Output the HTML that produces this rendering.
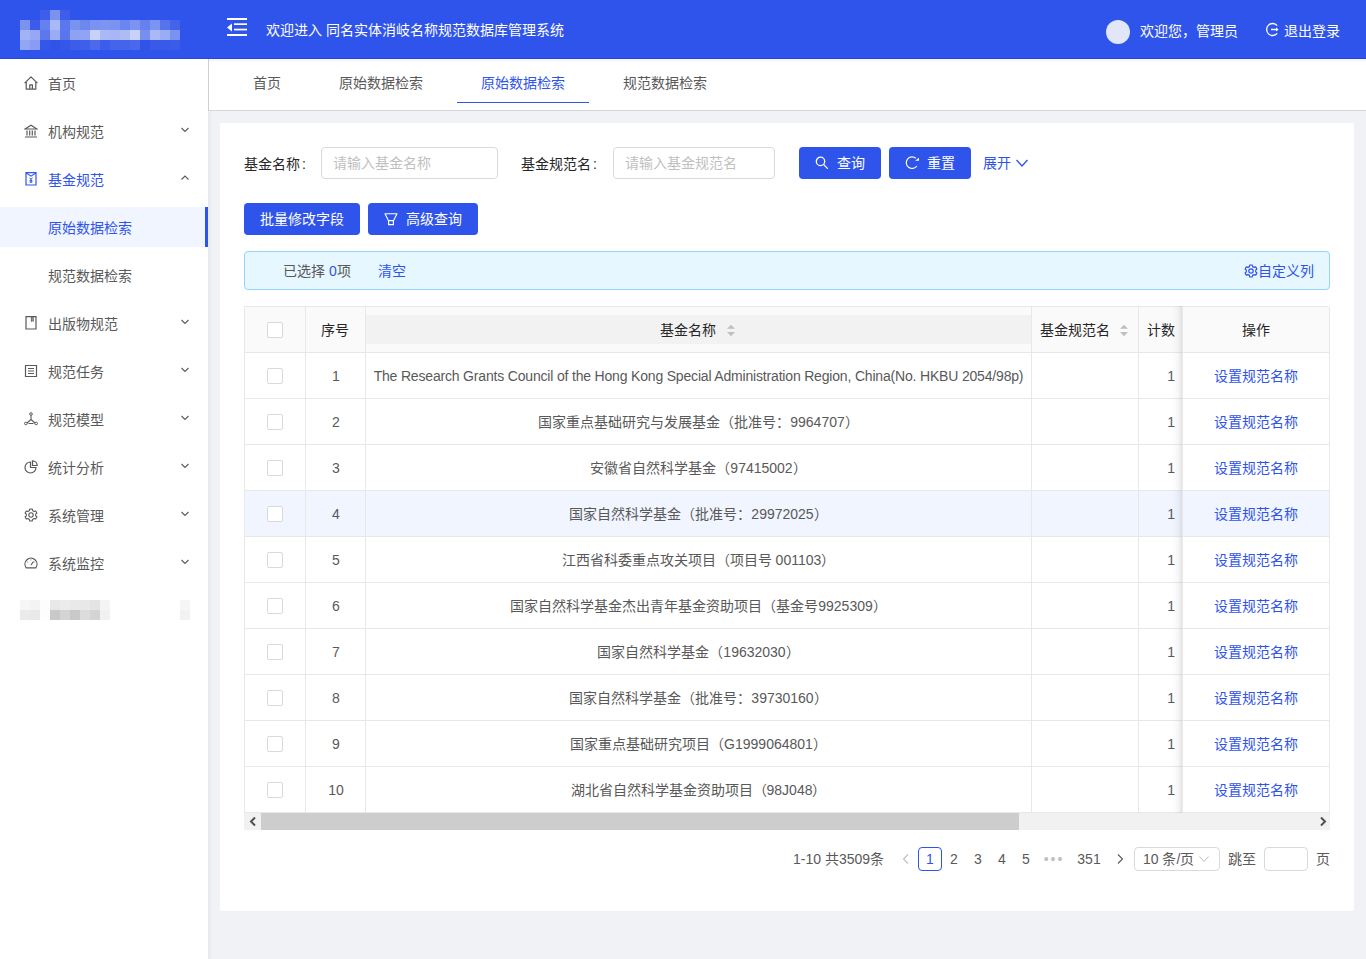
<!DOCTYPE html><html lang="zh-CN"><head><meta charset="utf-8"><style>
*{box-sizing:border-box;margin:0;padding:0}
html,body{width:1366px;height:959px;overflow:hidden}
body{background:#f0f2f5;font-family:"Liberation Sans",sans-serif;font-size:14px;color:#595959;position:relative}
.a{position:absolute}
.nw{white-space:nowrap}
#hdr{left:0;top:0;width:1366px;height:59px;background:#2f54eb;border-bottom:1px solid #2446e4}
.mz{position:absolute;width:10px;height:10px}
#side{left:0;top:59px;width:208px;height:900px;background:#fff}
.mi{position:absolute;left:0;width:208px;height:40px;line-height:40px;color:#595959}
.mi .t{position:absolute;left:48px;top:0}
.mi svg.ic{position:absolute;left:24px;top:12px}
.mi svg.ar{position:absolute;left:180px;top:13px}
#tabs{left:209px;top:59px;width:1157px;height:52px;background:#fff;border-bottom:1px solid #d6d6d6}
.tab{position:absolute;top:0;height:51px;line-height:48px;color:#595959}
#card{left:220px;top:123px;width:1134px;height:788px;background:#fff;border-radius:2px}
.lbl{color:#262626}
.inp{position:absolute;height:32px;border:1px solid #d9d9d9;border-radius:4px;background:#fff;color:#bfbfbf;line-height:30px;padding-left:11px}
.btn{position:absolute;height:32px;border-radius:4px;background:#2f54eb;color:#fff;line-height:32px}
.th{position:absolute;color:#262626}
.cb{position:absolute;width:16px;height:16px;border:1px solid #d9d9d9;border-radius:2px;background:#fff}
.row{position:absolute;left:0;width:1086px;height:46px;border-bottom:1px solid #e8e8e8}
.vl{position:absolute;top:0;width:1px;background:#e8e8e8}
.pg{position:absolute;top:0;height:24px;line-height:24px;text-align:center;color:#595959}
</style></head><body>
<div id="hdr" class="a">
<div class="mz" style="left:40px;top:10px;background:#3d5dea"></div>
<div class="mz" style="left:50px;top:10px;background:#7a92f0"></div>
<div class="mz" style="left:60px;top:10px;background:#3d5dea"></div>
<div class="mz" style="left:20px;top:20px;background:#7b93f0"></div>
<div class="mz" style="left:30px;top:20px;background:#3a5ce9"></div>
<div class="mz" style="left:40px;top:20px;background:#6580ef"></div>
<div class="mz" style="left:50px;top:20px;background:#aab8f6"></div>
<div class="mz" style="left:60px;top:20px;background:#5a77ee"></div>
<div class="mz" style="left:70px;top:20px;background:#7b93f0"></div>
<div class="mz" style="left:80px;top:20px;background:#6d87ef"></div>
<div class="mz" style="left:90px;top:20px;background:#7b93f0"></div>
<div class="mz" style="left:100px;top:20px;background:#7d95f1"></div>
<div class="mz" style="left:110px;top:20px;background:#7b93f0"></div>
<div class="mz" style="left:120px;top:20px;background:#6c86ef"></div>
<div class="mz" style="left:130px;top:20px;background:#7c94f1"></div>
<div class="mz" style="left:140px;top:20px;background:#6780ee"></div>
<div class="mz" style="left:150px;top:20px;background:#7c94f1"></div>
<div class="mz" style="left:160px;top:20px;background:#5673ec"></div>
<div class="mz" style="left:170px;top:20px;background:#4562ea"></div>
<div class="mz" style="left:20px;top:30px;background:#a2b2f5"></div>
<div class="mz" style="left:30px;top:30px;background:#96a8f4"></div>
<div class="mz" style="left:40px;top:30px;background:#5c78ec"></div>
<div class="mz" style="left:50px;top:30px;background:#9aacf4"></div>
<div class="mz" style="left:60px;top:30px;background:#5a76ec"></div>
<div class="mz" style="left:70px;top:30px;background:#8ea2f3"></div>
<div class="mz" style="left:80px;top:30px;background:#90a4f4"></div>
<div class="mz" style="left:90px;top:30px;background:#c8d2f9"></div>
<div class="mz" style="left:100px;top:30px;background:#aab8f6"></div>
<div class="mz" style="left:110px;top:30px;background:#a8b6f6"></div>
<div class="mz" style="left:120px;top:30px;background:#aebcf6"></div>
<div class="mz" style="left:130px;top:30px;background:#c8d2f9"></div>
<div class="mz" style="left:140px;top:30px;background:#7790f0"></div>
<div class="mz" style="left:150px;top:30px;background:#aab8f6"></div>
<div class="mz" style="left:160px;top:30px;background:#9aacf4"></div>
<div class="mz" style="left:170px;top:30px;background:#7a92f0"></div>
<div class="mz" style="left:20px;top:40px;background:#93a6f3"></div>
<div class="mz" style="left:30px;top:40px;background:#879cf2"></div>
<div class="mz" style="left:40px;top:40px;background:#3456e9"></div>
<div class="mz" style="left:50px;top:40px;background:#3153e8"></div>
<div class="mz" style="left:60px;top:40px;background:#3456e9"></div>
<div class="mz" style="left:70px;top:40px;background:#3c5dea"></div>
<div class="mz" style="left:80px;top:40px;background:#3f5fea"></div>
<div class="mz" style="left:90px;top:40px;background:#4a69eb"></div>
<div class="mz" style="left:100px;top:40px;background:#3c5dea"></div>
<div class="mz" style="left:110px;top:40px;background:#4464eb"></div>
<div class="mz" style="left:120px;top:40px;background:#4564eb"></div>
<div class="mz" style="left:130px;top:40px;background:#4968eb"></div>
<div class="mz" style="left:140px;top:40px;background:#3153e8"></div>
<div class="mz" style="left:150px;top:40px;background:#3959e9"></div>
<div class="mz" style="left:160px;top:40px;background:#3859e9"></div>
<div class="mz" style="left:170px;top:40px;background:#3b5bea"></div>
<svg class="a" style="left:227px;top:17px" width="20" height="20" viewBox="0 0 20 20"><rect x="0" y="1" width="20" height="2" fill="#fff"/><rect x="7" y="6.3" width="13" height="1.7" fill="#fff"/><rect x="7" y="11.7" width="13" height="1.7" fill="#fff"/><rect x="0" y="17" width="20" height="2" fill="#fff"/><path d="M0 10.5 L5 6.5 L5 14.5 Z" fill="#fff"/></svg>
<div class="a nw" style="left:266px;top:21px;line-height:18px;color:#fff">欢迎进入 同名实体消岐名称规范数据库管理系统</div>
<div class="a" style="left:1106px;top:20px;width:24px;height:24px;border-radius:50%;background:#e1e6f9"></div>
<div class="a nw" style="left:1140px;top:22px;line-height:18px;color:#fff">欢迎您，管理员</div>
<svg class="a" style="left:1265px;top:22px" width="15" height="15" viewBox="0 0 15 15"><path d="M12.2 3.6 A6 6 0 1 0 12.2 11.4" fill="none" stroke="#fff" stroke-width="1.3"/><path d="M6 7.5 H12.5" stroke="#fff" stroke-width="1.5"/><path d="M11 5.5 L13.5 7.5 L11 9.5Z" fill="#fff"/></svg>
<div class="a nw" style="left:1284px;top:22px;line-height:18px;color:#fff">退出登录</div>
</div>
<div id="side" class="a">
<div class="mi" style="top:5px;color:#595959"><svg class="ic" width="14" height="14" viewBox="0 0 14 14"><path d="M0.6 7.2 L7 0.8 L13.4 7.2 M2.2 5.8 V13.2 H11.8 V5.8 M5.8 13.2 V8.8 H8.4 V13.2" fill="none" stroke="#595959" stroke-width="1.2" stroke-linejoin="round"/></svg><span class="t nw">首页</span></div>
<div class="mi" style="top:53px;color:#595959"><svg class="ic" width="14" height="14" viewBox="0 0 14 14"><path d="M1 5 L7 1.2 L13 5 Z M1 13 H13 M3 6.5 V11.5 M5.7 6.5 V11.5 M8.3 6.5 V11.5 M11 6.5 V11.5" fill="none" stroke="#595959" stroke-width="1.2"/></svg><span class="t nw">机构规范</span><svg class="ar" width="10" height="10" viewBox="0 0 10 10"><path d="M1.5 3 L5 6.5 L8.5 3" fill="none" stroke="#595959" stroke-width="1.1"/></svg></div>
<div class="mi" style="top:101px;color:#2f54eb"><svg class="ic" width="14" height="14" viewBox="0 0 14 14"><path d="M2 0.7 H12 V13 H2 Z" fill="none" stroke="#2f54eb" stroke-width="1.2"/><path d="M2.2 1 L7 4.2 L11.8 1" fill="none" stroke="#2f54eb" stroke-width="1.1"/><path d="M5.6 5.6 L7 7.6 L8.4 5.6 M7 7.6 V11 M5.6 8.6 H8.4 M5.6 10 H8.4" fill="none" stroke="#2f54eb" stroke-width="1"/></svg><span class="t nw">基金规范</span><svg class="ar" width="10" height="10" viewBox="0 0 10 10"><path d="M1.5 6.5 L5 3 L8.5 6.5" fill="none" stroke="#595959" stroke-width="1.1"/></svg></div>
<div class="mi" style="top:148px;background:#f0f5ff;color:#2f54eb"><span class="t nw" style="top:1px">原始数据检索</span><div class="a" style="left:205px;top:0;width:3px;height:40px;background:#2f54eb"></div></div>
<div class="mi" style="top:197px"><span class="t nw">规范数据检索</span></div>
<div class="mi" style="top:245px"><svg class="ic" width="14" height="14" viewBox="0 0 14 14"><path d="M2 0.7 H12 V13 H2 Z" fill="none" stroke="#595959" stroke-width="1.2"/><path d="M7.4 0.7 V5.5 L8.3 4.6 L9.2 5.5 V0.7 Z" fill="#595959" fill-opacity="0.5" stroke="#595959" stroke-width="0.9"/></svg><span class="t nw">出版物规范</span><svg class="ar" width="10" height="10" viewBox="0 0 10 10"><path d="M1.5 3 L5 6.5 L8.5 3" fill="none" stroke="#595959" stroke-width="1.1"/></svg></div>
<div class="mi" style="top:293px"><svg class="ic" width="14" height="14" viewBox="0 0 14 14"><path d="M1.5 1.5 H12.5 V12.5 H1.5 Z M4 4.5 H10 M4 7 H10 M4 9.5 H10" fill="none" stroke="#595959" stroke-width="1.2"/></svg><span class="t nw">规范任务</span><svg class="ar" width="10" height="10" viewBox="0 0 10 10"><path d="M1.5 3 L5 6.5 L8.5 3" fill="none" stroke="#595959" stroke-width="1.1"/></svg></div>
<div class="mi" style="top:341px"><svg class="ic" width="14" height="14" viewBox="0 0 14 14"><circle cx="7" cy="2" r="1.3" fill="none" stroke="#595959" stroke-width="1"/><circle cx="1.8" cy="11.5" r="1.3" fill="none" stroke="#595959" stroke-width="1"/><circle cx="12.2" cy="11.5" r="1.3" fill="none" stroke="#595959" stroke-width="1"/><path d="M7 3.3 V7.5 L3 11 M7 7.5 L11 11 M4.5 11.5 H9.5" fill="none" stroke="#595959" stroke-width="1.1"/></svg><span class="t nw">规范模型</span><svg class="ar" width="10" height="10" viewBox="0 0 10 10"><path d="M1.5 3 L5 6.5 L8.5 3" fill="none" stroke="#595959" stroke-width="1.1"/></svg></div>
<div class="mi" style="top:389px"><svg class="ic" width="14" height="14" viewBox="0 0 14 14"><path d="M6.5 2 A5.5 5.5 0 1 0 12 7.5 H6.5 Z M8.5 0.8 V5.5 H13.2 A4.7 4.7 0 0 0 8.5 0.8 Z" fill="none" stroke="#595959" stroke-width="1.2"/></svg><span class="t nw">统计分析</span><svg class="ar" width="10" height="10" viewBox="0 0 10 10"><path d="M1.5 3 L5 6.5 L8.5 3" fill="none" stroke="#595959" stroke-width="1.1"/></svg></div>
<div class="mi" style="top:437px"><svg class="ic" width="14" height="14" viewBox="0 0 14 14"><path d="M5.8 1 H8.2 L8.6 2.6 L10.1 3.4 L11.7 2.9 L12.9 5 L11.7 6.1 V7.9 L12.9 9 L11.7 11.1 L10.1 10.6 L8.6 11.4 L8.2 13 H5.8 L5.4 11.4 L3.9 10.6 L2.3 11.1 L1.1 9 L2.3 7.9 V6.1 L1.1 5 L2.3 2.9 L3.9 3.4 L5.4 2.6 Z" fill="none" stroke="#595959" stroke-width="1.1" stroke-linejoin="round"/><circle cx="7" cy="7" r="2.2" fill="none" stroke="#595959" stroke-width="1.1"/></svg><span class="t nw">系统管理</span><svg class="ar" width="10" height="10" viewBox="0 0 10 10"><path d="M1.5 3 L5 6.5 L8.5 3" fill="none" stroke="#595959" stroke-width="1.1"/></svg></div>
<div class="mi" style="top:485px"><svg class="ic" width="14" height="14" viewBox="0 0 14 14"><path d="M2.2 11.8 A6 6 0 1 1 11.8 11.8 Z" fill="none" stroke="#595959" stroke-width="1.2"/><path d="M7 9 L9.5 5.5" stroke="#595959" stroke-width="1.2"/><path d="M3.5 6 L4.2 6.4 M7 3.5 V4.3 M10.5 6 L9.8 6.4" stroke="#595959" stroke-width="0.9"/></svg><span class="t nw">系统监控</span><svg class="ar" width="10" height="10" viewBox="0 0 10 10"><path d="M1.5 3 L5 6.5 L8.5 3" fill="none" stroke="#595959" stroke-width="1.1"/></svg></div>
<div class="mz" style="left:20px;top:541px;background:#f6f6f6"></div>
<div class="mz" style="left:20px;top:551px;background:#ebebeb"></div>
<div class="mz" style="left:30px;top:541px;background:#f3f3f3"></div>
<div class="mz" style="left:30px;top:551px;background:#e9e9e9"></div>
<div class="mz" style="left:40px;top:541px;background:#fdfdfd"></div>
<div class="mz" style="left:40px;top:551px;background:#fdfdfd"></div>
<div class="mz" style="left:50px;top:541px;background:#e8e8e8"></div>
<div class="mz" style="left:50px;top:551px;background:#c9c9c9"></div>
<div class="mz" style="left:60px;top:541px;background:#ebebeb"></div>
<div class="mz" style="left:60px;top:551px;background:#d4d4d4"></div>
<div class="mz" style="left:70px;top:541px;background:#e9e9e9"></div>
<div class="mz" style="left:70px;top:551px;background:#c9c9c9"></div>
<div class="mz" style="left:80px;top:541px;background:#e8e8e8"></div>
<div class="mz" style="left:80px;top:551px;background:#dcdcdc"></div>
<div class="mz" style="left:90px;top:541px;background:#e4e4e4"></div>
<div class="mz" style="left:90px;top:551px;background:#d4d4d4"></div>
<div class="mz" style="left:100px;top:541px;background:#f4f4f4"></div>
<div class="mz" style="left:100px;top:551px;background:#f1f1f1"></div>
<div class="mz" style="left:180px;top:541px;background:#f6f6f6"></div><div class="mz" style="left:180px;top:551px;background:#f2f2f2"></div>
</div>
<div class="a" style="left:208px;top:59px;width:1px;height:52px;background:#cfcfcf"></div>
<div class="a" style="left:208px;top:111px;width:4px;height:848px;background:linear-gradient(to right,#e5e8ec,#f0f2f5)"></div>
<div id="tabs" class="a">
<div class="tab nw" style="left:44px;color:#595959">首页</div>
<div class="tab nw" style="left:130px;color:#595959">原始数据检索</div>
<div class="tab nw" style="left:272px;color:#2f54eb">原始数据检索</div>
<div class="tab nw" style="left:414px;color:#595959">规范数据检索</div>
<div class="a" style="left:248px;top:43px;width:132px;height:1px;background:#2f54eb"></div>
<div class="a" style="left:0;top:0;width:1157px;height:4px;background:linear-gradient(to bottom,rgba(0,0,0,0.04),rgba(0,0,0,0))"></div>
</div>
<div id="card" class="a">
<div class="a nw lbl" style="left:24px;top:32px;line-height:18px">基金名称<span style="margin-left:2px">:</span></div>
<div class="inp nw" style="left:101px;top:24px;width:177px">请输入基金名称</div>
<div class="a nw lbl" style="left:301px;top:32px;line-height:18px">基金规范名<span style="margin-left:2px">:</span></div>
<div class="inp nw" style="left:393px;top:24px;width:162px">请输入基金规范名</div>
<div class="btn nw" style="left:579px;top:24px;width:82px"><svg class="a" style="left:16px;top:9px" width="14" height="14" viewBox="0 0 14 14"><circle cx="5.5" cy="5.4" r="4.2" fill="none" stroke="#fff" stroke-width="1.3"/><path d="M8.5 8.4 L12.4 12.4" stroke="#fff" stroke-width="1.3" stroke-linecap="round"/></svg><span class="a" style="left:38px;top:0">查询</span></div>
<div class="btn nw" style="left:669px;top:24px;width:82px"><svg class="a" style="left:16px;top:9px" width="15" height="15" viewBox="0 0 15 15"><path d="M10.83 2.26 A5.8 5.8 0 1 0 11.85 10.03" fill="none" stroke="#fff" stroke-width="1.2"/><path d="M10.1 4.8 L14 4.8 L14 1.7 Z" fill="#fff"/></svg><span class="a" style="left:38px;top:0">重置</span></div>
<div class="a nw" style="left:763px;top:31px;line-height:18px;color:#2f54eb">展开</div>
<svg class="a" style="left:795px;top:33px" width="14" height="14" viewBox="0 0 14 14"><path d="M1.5 4 L7 10 L12.5 4" fill="none" stroke="#2f54eb" stroke-width="1.3"/></svg>
<div class="btn nw" style="left:24px;top:80px;width:116px;padding-left:16px">批量修改字段</div>
<div class="btn nw" style="left:148px;top:80px;width:110px"><svg class="a" style="left:16px;top:9px" width="14" height="14" viewBox="0 0 14 14"><path d="M1 1.8 H13 L9.6 8.6 H4.4 Z" fill="none" stroke="#fff" stroke-width="1.1" stroke-linejoin="round"/><path d="M4.6 8.6 V12.6 H9.4 V8.6" fill="none" stroke="#fff" stroke-width="1.2"/></svg><span class="a" style="left:38px;top:0">高级查询</span></div>
<div class="a" style="left:24px;top:128px;width:1086px;height:39px;background:#e6f7ff;border:1px solid #91d5ff;border-radius:4px"></div>
<div class="a nw" style="left:63px;top:139px;line-height:18px;color:#595959">已选择 <span style="color:#2f54eb">0</span>项</div>
<div class="a nw" style="left:158px;top:139px;line-height:18px;color:#2f54eb">清空</div>
<svg class="a" style="left:1024px;top:141px" width="14" height="14" viewBox="0 0 14 14"><path d="M5.8 1 H8.2 L8.6 2.6 L10.1 3.4 L11.7 2.9 L12.9 5 L11.7 6.1 V7.9 L12.9 9 L11.7 11.1 L10.1 10.6 L8.6 11.4 L8.2 13 H5.8 L5.4 11.4 L3.9 10.6 L2.3 11.1 L1.1 9 L2.3 7.9 V6.1 L1.1 5 L2.3 2.9 L3.9 3.4 L5.4 2.6 Z" fill="none" stroke="#2f54eb" stroke-width="1.2" stroke-linejoin="round"/><circle cx="7" cy="7" r="2.2" fill="none" stroke="#2f54eb" stroke-width="1.2"/></svg>
<div class="a nw" style="left:1038px;top:139px;line-height:18px;color:#2f54eb">自定义列</div>
<div class="a" style="left:24px;top:183px;width:1086px;height:524px;overflow:hidden;border-radius:2px 2px 0 0">
<div class="a" style="left:0;top:0;width:1086px;height:47px;background:#fafafa;border-top:1px solid #e8e8e8;border-bottom:1px solid #e8e8e8"></div>
<div class="a" style="left:122px;top:9px;width:665px;height:29px;background:#f2f2f2"></div>
<div class="row" style="top:47px;height:46px;background:#fff"></div>
<div class="row" style="top:93px;height:46px;background:#fff"></div>
<div class="row" style="top:139px;height:46px;background:#fff"></div>
<div class="row" style="top:185px;height:46px;background:#f0f5ff"></div>
<div class="row" style="top:231px;height:46px;background:#fff"></div>
<div class="row" style="top:277px;height:46px;background:#fff"></div>
<div class="row" style="top:323px;height:46px;background:#fff"></div>
<div class="row" style="top:369px;height:46px;background:#fff"></div>
<div class="row" style="top:415px;height:46px;background:#fff"></div>
<div class="row" style="top:461px;height:46px;background:#fff"></div>
<div class="vl" style="left:0px;height:507px"></div>
<div class="vl" style="left:61px;height:507px"></div>
<div class="vl" style="left:121px;height:507px"></div>
<div class="vl" style="left:787px;height:507px"></div>
<div class="vl" style="left:894px;height:507px"></div>
<div class="cb" style="left:23px;top:16px"></div>
<div class="th nw" style="left:61px;width:60px;text-align:center;top:15px;line-height:18px">序号</div>
<div class="th nw" style="left:416px;top:15px;line-height:18px">基金名称</div>
<svg class="a" style="left:482px;top:17px" width="10" height="14" viewBox="0 0 10 14"><path d="M1 5.7 L5 1.7 L9 5.7Z M1 9 L5 13.3 L9 9Z" fill="#bfbfbf"/></svg>
<div class="th nw" style="left:796px;top:15px;line-height:18px">基金规范名</div>
<svg class="a" style="left:875px;top:17px" width="10" height="14" viewBox="0 0 10 14"><path d="M1 5.7 L5 1.7 L9 5.7Z M1 9 L5 13.3 L9 9Z" fill="#bfbfbf"/></svg>
<div class="th nw" style="left:903px;top:15px;line-height:18px">计数</div>
<div class="cb" style="left:23px;top:62px"></div>
<div class="a nw" style="left:62px;width:60px;text-align:center;top:61px;line-height:18px">1</div>
<div class="a nw" style="left:122px;width:665px;text-align:center;top:61px;line-height:18px;letter-spacing:-0.18px">The Research Grants Council of the Hong Kong Special Administration Region, China(No. HKBU 2054/98p)</div>
<div class="a nw" style="left:916px;width:15px;text-align:right;top:61px;line-height:18px">1</div>
<div class="cb" style="left:23px;top:108px"></div>
<div class="a nw" style="left:62px;width:60px;text-align:center;top:107px;line-height:18px">2</div>
<div class="a nw" style="left:122px;width:665px;text-align:center;top:107px;line-height:18px">国家重点基础研究与发展基金（批准号：9964707）</div>
<div class="a nw" style="left:916px;width:15px;text-align:right;top:107px;line-height:18px">1</div>
<div class="cb" style="left:23px;top:154px"></div>
<div class="a nw" style="left:62px;width:60px;text-align:center;top:153px;line-height:18px">3</div>
<div class="a nw" style="left:122px;width:665px;text-align:center;top:153px;line-height:18px">安徽省自然科学基金（97415002）</div>
<div class="a nw" style="left:916px;width:15px;text-align:right;top:153px;line-height:18px">1</div>
<div class="cb" style="left:23px;top:200px"></div>
<div class="a nw" style="left:62px;width:60px;text-align:center;top:199px;line-height:18px">4</div>
<div class="a nw" style="left:122px;width:665px;text-align:center;top:199px;line-height:18px">国家自然科学基金（批准号：29972025）</div>
<div class="a nw" style="left:916px;width:15px;text-align:right;top:199px;line-height:18px">1</div>
<div class="cb" style="left:23px;top:246px"></div>
<div class="a nw" style="left:62px;width:60px;text-align:center;top:245px;line-height:18px">5</div>
<div class="a nw" style="left:122px;width:665px;text-align:center;top:245px;line-height:18px">江西省科委重点攻关项目（项目号 001103）</div>
<div class="a nw" style="left:916px;width:15px;text-align:right;top:245px;line-height:18px">1</div>
<div class="cb" style="left:23px;top:292px"></div>
<div class="a nw" style="left:62px;width:60px;text-align:center;top:291px;line-height:18px">6</div>
<div class="a nw" style="left:122px;width:665px;text-align:center;top:291px;line-height:18px">国家自然科学基金杰出青年基金资助项目（基金号9925309）</div>
<div class="a nw" style="left:916px;width:15px;text-align:right;top:291px;line-height:18px">1</div>
<div class="cb" style="left:23px;top:338px"></div>
<div class="a nw" style="left:62px;width:60px;text-align:center;top:337px;line-height:18px">7</div>
<div class="a nw" style="left:122px;width:665px;text-align:center;top:337px;line-height:18px">国家自然科学基金（19632030）</div>
<div class="a nw" style="left:916px;width:15px;text-align:right;top:337px;line-height:18px">1</div>
<div class="cb" style="left:23px;top:384px"></div>
<div class="a nw" style="left:62px;width:60px;text-align:center;top:383px;line-height:18px">8</div>
<div class="a nw" style="left:122px;width:665px;text-align:center;top:383px;line-height:18px">国家自然科学基金（批准号：39730160）</div>
<div class="a nw" style="left:916px;width:15px;text-align:right;top:383px;line-height:18px">1</div>
<div class="cb" style="left:23px;top:430px"></div>
<div class="a nw" style="left:62px;width:60px;text-align:center;top:429px;line-height:18px">9</div>
<div class="a nw" style="left:122px;width:665px;text-align:center;top:429px;line-height:18px">国家重点基础研究项目（G1999064801）</div>
<div class="a nw" style="left:916px;width:15px;text-align:right;top:429px;line-height:18px">1</div>
<div class="cb" style="left:23px;top:476px"></div>
<div class="a nw" style="left:62px;width:60px;text-align:center;top:475px;line-height:18px">10</div>
<div class="a nw" style="left:122px;width:665px;text-align:center;top:475px;line-height:18px">湖北省自然科学基金资助项目（98J048）</div>
<div class="a nw" style="left:916px;width:15px;text-align:right;top:475px;line-height:18px">1</div>
<div class="a" style="left:928px;top:0;width:10px;height:507px;background:linear-gradient(to right,rgba(0,0,0,0),rgba(0,0,0,0.03) 60%,rgba(0,0,0,0.1))"></div>
<div class="a" style="left:938px;top:0;width:148px;height:507px;background:#fff;border-left:1px solid #e8e8e8;border-right:1px solid #e8e8e8;border-top-right-radius:2px;overflow:hidden">
<div class="a" style="left:0;top:0;width:146px;height:47px;background:#fafafa;border-top:1px solid #e8e8e8;border-bottom:1px solid #e8e8e8"></div>
<div class="th nw" style="left:0;width:146px;text-align:center;top:15px;line-height:18px">操作</div>
<div class="a" style="left:0;top:47px;width:146px;height:46px;background:#fff;border-bottom:1px solid #e8e8e8"></div>
<div class="a nw" style="left:0;width:146px;text-align:center;top:61px;line-height:18px;color:#2f54eb">设置规范名称</div>
<div class="a" style="left:0;top:93px;width:146px;height:46px;background:#fff;border-bottom:1px solid #e8e8e8"></div>
<div class="a nw" style="left:0;width:146px;text-align:center;top:107px;line-height:18px;color:#2f54eb">设置规范名称</div>
<div class="a" style="left:0;top:139px;width:146px;height:46px;background:#fff;border-bottom:1px solid #e8e8e8"></div>
<div class="a nw" style="left:0;width:146px;text-align:center;top:153px;line-height:18px;color:#2f54eb">设置规范名称</div>
<div class="a" style="left:0;top:185px;width:146px;height:46px;background:#f0f5ff;border-bottom:1px solid #e8e8e8"></div>
<div class="a nw" style="left:0;width:146px;text-align:center;top:199px;line-height:18px;color:#2f54eb">设置规范名称</div>
<div class="a" style="left:0;top:231px;width:146px;height:46px;background:#fff;border-bottom:1px solid #e8e8e8"></div>
<div class="a nw" style="left:0;width:146px;text-align:center;top:245px;line-height:18px;color:#2f54eb">设置规范名称</div>
<div class="a" style="left:0;top:277px;width:146px;height:46px;background:#fff;border-bottom:1px solid #e8e8e8"></div>
<div class="a nw" style="left:0;width:146px;text-align:center;top:291px;line-height:18px;color:#2f54eb">设置规范名称</div>
<div class="a" style="left:0;top:323px;width:146px;height:46px;background:#fff;border-bottom:1px solid #e8e8e8"></div>
<div class="a nw" style="left:0;width:146px;text-align:center;top:337px;line-height:18px;color:#2f54eb">设置规范名称</div>
<div class="a" style="left:0;top:369px;width:146px;height:46px;background:#fff;border-bottom:1px solid #e8e8e8"></div>
<div class="a nw" style="left:0;width:146px;text-align:center;top:383px;line-height:18px;color:#2f54eb">设置规范名称</div>
<div class="a" style="left:0;top:415px;width:146px;height:46px;background:#fff;border-bottom:1px solid #e8e8e8"></div>
<div class="a nw" style="left:0;width:146px;text-align:center;top:429px;line-height:18px;color:#2f54eb">设置规范名称</div>
<div class="a" style="left:0;top:461px;width:146px;height:46px;background:#fff;border-bottom:1px solid #e8e8e8"></div>
<div class="a nw" style="left:0;width:146px;text-align:center;top:475px;line-height:18px;color:#2f54eb">设置规范名称</div>
</div>
<div class="a" style="left:0;top:507px;width:1086px;height:17px;background:#f1f1f1"></div>
<div class="a" style="left:17px;top:507px;width:758px;height:17px;background:#cdcdcd"></div>
<svg class="a" style="left:4px;top:510px" width="10" height="11" viewBox="0 0 10 11"><path d="M7 1.5 L3 5.5 L7 9.5" fill="none" stroke="#505050" stroke-width="2"/></svg>
<svg class="a" style="left:1074px;top:510px" width="10" height="11" viewBox="0 0 10 11"><path d="M3 1.5 L7 5.5 L3 9.5" fill="none" stroke="#505050" stroke-width="2"/></svg>
</div>
<div class="a nw" style="left:573px;top:727px;line-height:18px">1-10 共3509条</div>
<svg class="a" style="left:680px;top:730px" width="12" height="12" viewBox="0 0 12 12"><path d="M8 1.5 L3.5 6 L8 10.5" fill="none" stroke="#bfbfbf" stroke-width="1.1"/></svg>
<div class="pg" style="left:698px;top:724px;width:24px;border:1px solid #2f54eb;border-radius:4px;line-height:22px;color:#2f54eb">1</div>
<div class="pg" style="left:722px;top:724px;width:24px">2</div>
<div class="pg" style="left:746px;top:724px;width:24px">3</div>
<div class="pg" style="left:770px;top:724px;width:24px">4</div>
<div class="pg" style="left:794px;top:724px;width:24px">5</div>
<div class="pg" style="left:822px;top:724px;width:24px;color:#bfbfbf;letter-spacing:2px">•••</div>
<div class="pg" style="left:846px;top:724px;width:46px">351</div>
<svg class="a" style="left:894px;top:730px" width="12" height="12" viewBox="0 0 12 12"><path d="M4 1.5 L8.5 6 L4 10.5" fill="none" stroke="#595959" stroke-width="1.1"/></svg>
<div class="a nw" style="left:914px;top:724px;width:86px;height:24px;border:1px solid #d9d9d9;border-radius:4px;line-height:22px;padding-left:8px">10 条/页</div>
<svg class="a" style="left:978px;top:731px" width="12" height="10" viewBox="0 0 12 10"><path d="M1.5 2.5 L6 7.5 L10.5 2.5" fill="none" stroke="#bfbfbf" stroke-width="1"/></svg>
<div class="a nw" style="left:1008px;top:727px;line-height:18px">跳至</div>
<div class="a" style="left:1044px;top:724px;width:44px;height:24px;border:1px solid #d9d9d9;border-radius:4px"></div>
<div class="a nw" style="left:1096px;top:727px;line-height:18px">页</div>
</div>
</body></html>
